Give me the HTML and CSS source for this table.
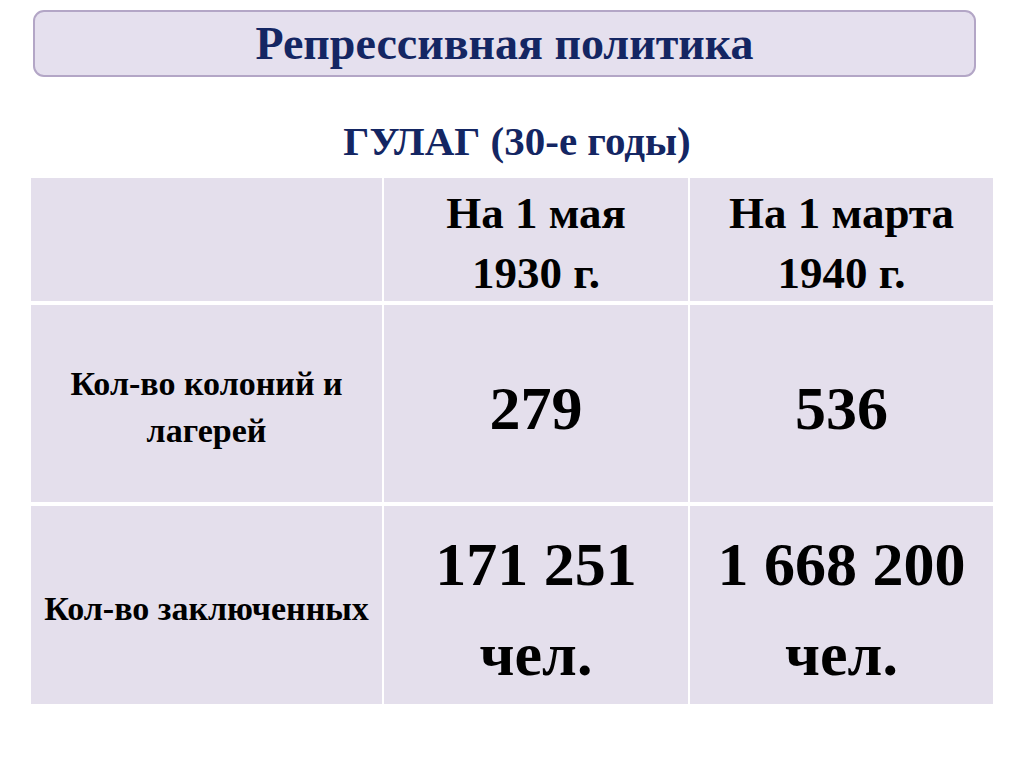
FILE: index.html
```html
<!DOCTYPE html>
<html lang="ru">
<head>
<meta charset="utf-8">
<title>Репрессивная политика</title>
<link rel="stylesheet" href="styles.css">
</head>
<body>
<div class="slide">
  <div class="title-box"><h1 class="title">Репрессивная политика</h1></div>
  <h2 class="subtitle">ГУЛАГ (30-е годы)</h2>
  <div class="grid">
    <div class="cell"></div>
    <div class="cell head">На 1 мая<br>1930 г.</div>
    <div class="cell head">На 1 марта<br>1940 г.</div>
    <div class="cell label">Кол-во колоний и<br>лагерей</div>
    <div class="cell num">279</div>
    <div class="cell num">536</div>
    <div class="cell label">Кол-во заключенных</div>
    <div class="cell num big">171 251<br>чел.</div>
    <div class="cell num big">1 668 200<br>чел.</div>
  </div>
</div>
</body>
</html>
```

FILE: styles.css
```css
html, body {
  margin: 0;
  padding: 0;
  background: #ffffff;
}
.slide {
  width: 1024px;
  height: 767px;
  font-family: "Liberation Serif", "Times New Roman", serif;
  font-weight: bold;
  padding-top: 10px;
  box-sizing: border-box;
}
.title-box {
  margin-left: 33px;
  width: 943px;
  height: 67px;
  box-sizing: border-box;
  border: 2px solid #b3a6c6;
  border-radius: 11px;
  background: #e5e0ee;
  display: flex;
  align-items: center;
  justify-content: center;
}
.title {
  margin: 0;
  font-size: 46px;
  font-weight: bold;
  color: #142663;
  line-height: 1;
}
.subtitle {
  margin: 0;
  height: 101px;
  padding-top: 26px;
  box-sizing: border-box;
  display: flex;
  align-items: center;
  justify-content: center;
  padding-left: 10px;
  font-size: 41px;
  font-weight: bold;
  color: #142663;
}
.grid {
  margin-left: 31px;
  display: grid;
  grid-template-columns: 351px 304px 303px;
  grid-template-rows: 123px 197px 198px;
  column-gap: 2px;
  row-gap: 4px;
}
.cell {
  background: #e4dfec;
  color: #000;
  display: flex;
  align-items: center;
  justify-content: center;
  text-align: center;
}
.head {
  font-size: 45px;
  line-height: 60px;
  padding-top: 6px;
}
.label {
  font-size: 34px;
  line-height: 47px;
  padding-top: 7px;
}
.num {
  font-size: 62px;
  line-height: 70px;
  padding-top: 8px;
}
.big {
  line-height: 90px;
  padding-top: 8px;
}
```
